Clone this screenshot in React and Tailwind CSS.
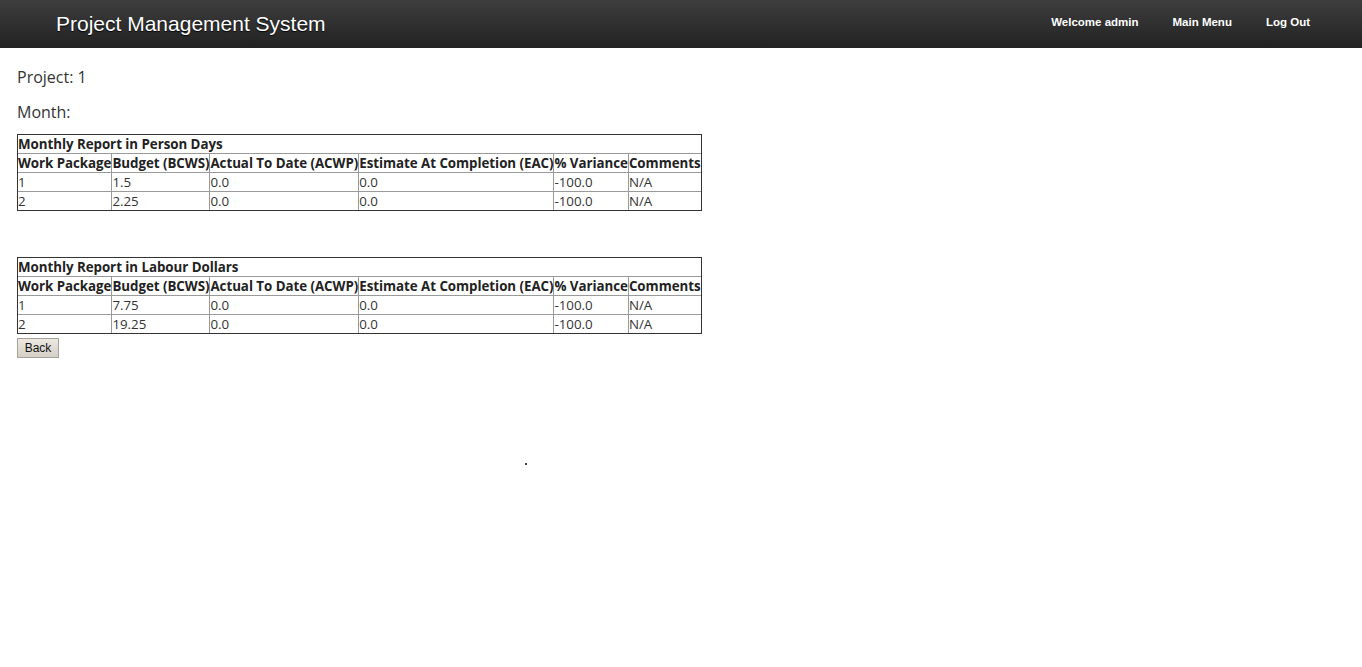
const rows1 = [
  ['1', '1.5', '0.0', '0.0', '-100.0', 'N/A'],
  ['2', '2.25', '0.0', '0.0', '-100.0', 'N/A'],
];

const rows2 = [
  ['1', '7.75', '0.0', '0.0', '-100.0', 'N/A'],
  ['2', '19.25', '0.0', '0.0', '-100.0', 'N/A'],
];

const heads = [
  'Work Package',
  'Budget (BCWS)',
  'Actual To Date (ACWP)',
  'Estimate At Completion (EAC)',
  '% Variance',
  'Comments',
];

function ReportTable({ title, rows }) {
  const cell = 'border-r border-b border-[#9a9a9a] last:border-r-0 p-0 text-left align-top whitespace-nowrap';
  return (
    <div className="w-fit border border-[#333]">
      <table className="block border-collapse text-[13.33px] leading-[18px] tracking-[-0.04px] text-[#333]">
        <tbody>
          <tr>
            <th colSpan={6} className={cell + ' font-bold text-[#222]'}>
              {title}
            </th>
          </tr>
          <tr>
            {heads.map((h) => (
              <th key={h} className={cell + ' font-bold text-[#222]'}>
                {h}
              </th>
            ))}
          </tr>
          {rows.map((r, i) => (
            <tr key={i} className="[&:last-child>td]:border-b-0">
              {r.map((c, j) => (
                <td key={j} className={cell + ' font-normal'}>
                  {c}
                </td>
              ))}
            </tr>
          ))}
        </tbody>
      </table>
    </div>
  );
}

export default function App() {
  return (
    <div className="relative min-h-[667px] bg-white font-['Open_Sans',sans-serif]">
      <header className="flex h-12 items-center justify-between bg-gradient-to-b from-[#3e3e3e] to-[#222] pl-14 pr-[35px] font-['Liberation_Sans',Arial,sans-serif]">
        <h1 className="text-[21px] leading-6 text-white [text-shadow:0_1px_1px_#000]">
          Project Management System
        </h1>
        <nav className="flex items-center pb-[2px] text-[11.5px] font-bold text-white">
          <a className="px-[17px]">Welcome admin</a>
          <a className="px-[17px]">Main Menu</a>
          <a className="px-[17px]">Log Out</a>
        </nav>
      </header>

      <main className="pl-[17px] text-[#333]">
        <div className="mt-[17px] text-[16px] leading-6">Project: 1</div>
        <div className="mt-[11px] text-[16px] leading-6">Month:</div>

        <div className="mt-[10px]">
          <ReportTable title="Monthly Report in Person Days" rows={rows1} />
        </div>
        <div className="mt-[46px]">
          <ReportTable title="Monthly Report in Labour Dollars" rows={rows2} />
        </div>
        <div className="mt-1">
          <button
            type="button"
            className="block h-5 w-[42px] border border-[#a5a29a] bg-gradient-to-b from-[#ece9e2] to-[#d4d0c8] text-[12px] leading-[18px] text-[#111] font-['Liberation_Sans',Arial,sans-serif]"
          >
            Back
          </button>
        </div>
      </main>

      <span className="absolute left-[525px] top-[463px] h-[2px] w-[2px] bg-[#444]" />
    </div>
  );
}
